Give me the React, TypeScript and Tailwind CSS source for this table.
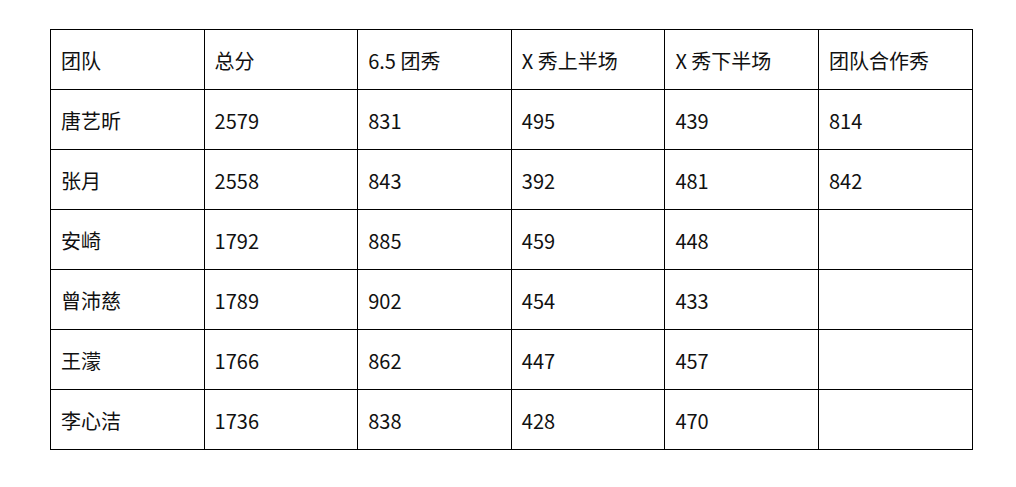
const header = ["团队", "总分", "6.5 团秀", "X 秀上半场", "X 秀下半场", "团队合作秀"];

const rows = [
  ["唐艺昕", "2579", "831", "495", "439", "814"],
  ["张月", "2558", "843", "392", "481", "842"],
  ["安崎", "1792", "885", "459", "448", ""],
  ["曾沛慈", "1789", "902", "454", "433", ""],
  ["王濛", "1766", "862", "447", "457", ""],
  ["李心洁", "1736", "838", "428", "470", ""],
];

function Cell({ text }: { text: string }) {
  return (
    <td className="border border-black h-[60px] w-[153.6px] pl-[10px] pr-3 pt-[2px] text-left align-middle text-[20px] text-[#111]">
      {text}
    </td>
  );
}

export default function App() {
  return (
    <div
      className="w-[1016px] h-[487px] bg-white pt-[29px] pl-[50px]"
      style={{ fontFamily: '"Noto Sans CJK SC", "Noto Sans", sans-serif' }}
    >
      <table className="border-collapse w-[922px] table-fixed">
        <tbody>
          <tr>
            {header.map((h, i) => (
              <Cell key={i} text={h} />
            ))}
          </tr>
          {rows.map((r, i) => (
            <tr key={i}>
              {r.map((c, j) => (
                <Cell key={j} text={c} />
              ))}
            </tr>
          ))}
        </tbody>
      </table>
    </div>
  );
}
